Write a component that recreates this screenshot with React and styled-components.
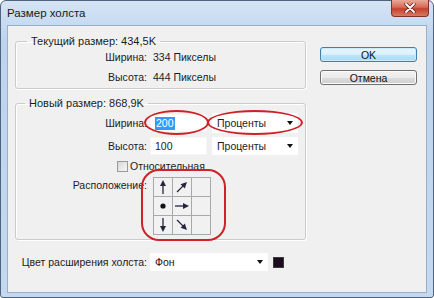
import styled, { createGlobalStyle } from 'styled-components'

const GlobalStyle = createGlobalStyle`
  html, body { margin: 0; padding: 0; background: #fff; }
  body {
    font-family: "Liberation Sans", Arial, sans-serif;
    font-size: 10.5px;
    color: #1c1c1c;
  }
`

const Window = styled.div`
  width: 434px;
  height: 298px;
  box-sizing: border-box;
  border: 1px solid #51647d;
  border-radius: 6px 6px 3px 3px;
  background: linear-gradient(#d5e4f5, #bdd4ed 40px, #c4d9ef);
  padding: 0 6px 4px;
  display: flex;
  flex-direction: column;
`

const TitleBar = styled.div`
  height: 24px;
  display: flex;
  align-items: center;
  margin-right: -2px;
`

const Title = styled.span`
  font-size: 11.5px;
  color: #1a1a1a;
  flex: 1;
`

const CloseBtn = styled.div`
  align-self: flex-start;
  margin-top: -1px;
  width: 38px;
  height: 17px;
  box-sizing: border-box;
  border: 1px solid #80332a;
  border-top: none;
  border-radius: 0 0 4px 4px;
  background: linear-gradient(#eaa999, #d56a57 45%, #c4402e 55%, #d97a62);
  display: flex;
  align-items: center;
  justify-content: center;
`

const Client = styled.div`
  flex: 1;
  display: flex;
  gap: 14px;
  background: #f0f0f0;
  border: 1px solid #98afcb;
  padding: 8px 9px 0 7px;
`

const LeftCol = styled.div`
  width: 291px;
  display: flex;
  flex-direction: column;
`

const RightCol = styled.div`
  display: flex;
  flex-direction: column;
  gap: 8px;
  padding-top: 13px;
`

const Group = styled.fieldset`
  margin: ${p => p.$gap || 0}px 0 0;
  padding: ${p => p.$top}px 11px 4px;
  min-width: 0;
  border: 1px solid #cbcbcb;
  border-radius: 3px;
  box-shadow: inset 1px 1px 0 #fff, 1px 1px 0 #fff;
`

const Legend = styled.legend`
  padding: 0 4px;
  line-height: 14px;
  font-size: 11px;
  margin-left: ${p => p.$shift || 0}px;
`

const Form = styled.div`
  display: grid;
  grid-template-columns: 120px auto;
  column-gap: ${p => p.$col}px;
  row-gap: ${p => p.$row}px;
  align-items: center;
  line-height: 14px;
`

const Label = styled.span`
  display: flex;
  justify-content: flex-end;
  white-space: nowrap;
  align-self: ${p => (p.$top ? 'start' : 'center')};
  padding-top: ${p => (p.$top ? 1 : 0)}px;
`

const Controls = styled.div`
  display: flex;
  align-items: center;
  gap: 5px;
`

const Marked = styled.div`
  position: relative;
  display: flex;
`

const Ring = styled.div`
  position: absolute;
  left: ${p => p.$l}px;
  right: ${p => p.$r}px;
  top: ${p => p.$t}px;
  bottom: ${p => p.$b}px;
  border: 2px solid #cf2128;
  border-radius: ${p => p.$radius || '50%'};
  pointer-events: none;
`

const Field = styled.div`
  width: 57px;
  height: 18px;
  box-sizing: border-box;
  background: #fff;
  border: 1px solid #f6f6f6;
  padding: 0 4px;
  display: flex;
  align-items: center;
`

const Selected = styled.span`
  background: #3399ff;
  color: #fff;
  padding: 0 1px;
  line-height: 13px;
`

const Select = styled.div`
  width: ${p => p.$w}px;
  height: ${p => p.$h}px;
  box-sizing: border-box;
  background: #fff;
  padding: 0 5px 0 5px;
  display: flex;
  align-items: center;
  justify-content: space-between;
  color: ${p => p.$tone || '#1c1c1c'};
`

const Caret = styled.span`
  width: 0;
  height: 0;
  border-left: 3px solid transparent;
  border-right: 3px solid transparent;
  border-top: 4px solid #111;
`

const CheckRow = styled.label`
  grid-column: 1 / -1;
  padding-left: 90px;
  display: flex;
  align-items: center;
  gap: 2px;
`

const Box = styled.span`
  width: 11px;
  height: 11px;
  box-sizing: border-box;
  border: 1px solid #9a9a9a;
  background: linear-gradient(135deg, #d8d8d8, #f7f7f7);
`

const AnchorGrid = styled.div`
  margin-left: 3px;
  display: grid;
  grid-template-columns: repeat(3, 18px);
  grid-auto-rows: 18px;
  gap: 1px;
  border: 1px solid #a9a9a9;
  background: #a9a9a9;
  width: max-content;
`

const Cell = styled.div`
  background: #f1f1f1;
  display: flex;
  align-items: center;
  justify-content: center;
`

const BottomRow = styled.div`
  margin-top: 13px;
  padding-left: 12px;
  display: grid;
  grid-template-columns: 120px auto;
  column-gap: 3px;
  align-items: center;
  line-height: 14px;
`

const Swatch = styled.span`
  width: 11px;
  height: 11px;
  background: #1b0c1d;
  border: 1px solid #3a3a3a;
  box-sizing: border-box;
`

const Button = styled.div`
  width: 97px;
  height: 15px;
  box-sizing: border-box;
  border: 1px solid ${p => (p.$primary ? '#3c7fb1' : '#707070')};
  border-radius: 3px;
  background: ${p => (p.$primary
    ? 'linear-gradient(#eaf6fd, #d9f0fc 50%, #bee6fd 50%, #a7d9f5)'
    : 'linear-gradient(#f2f2f2, #ebebeb 50%, #dddddd 50%, #cfcfcf)')};
  box-shadow: inset 0 0 0 1px ${p => (p.$primary ? '#c8ecfd' : '#fbfbfb')};
  display: flex;
  align-items: center;
  justify-content: center;
  color: #111;
`

const ink = '#25263d'

function Arrow({ dir }) {
  const rot = { n: 0, ne: 45, e: 90, se: 135, s: 180 }[dir]
  return (
    <svg width="16" height="16" viewBox="0 0 16 16">
      <g transform={`rotate(${rot} 8 8)`}>
        <line x1="8" y1="15" x2="8" y2="5" stroke={ink} strokeWidth="1.3" />
        <path d="M8 1 L11 7 L5 7 Z" fill={ink} />
      </g>
    </svg>
  )
}

function Dot() {
  return (
    <svg width="16" height="16" viewBox="0 0 16 16">
      <circle cx="8" cy="8" r="2.6" fill="#111" />
    </svg>
  )
}

const anchors = [['n'], ['ne'], [], ['dot'], ['e'], [], ['s'], ['se'], []]

export default function App() {
  return (
    <>
      <GlobalStyle />
      <Window>
        <TitleBar>
          <Title>Размер холста</Title>
          <CloseBtn>
            <svg width="12" height="10" viewBox="0 0 12 10">
              <path d="M2 1 L10 9 M10 1 L2 9" stroke="#5a1d15" strokeWidth="3.2" strokeLinecap="round" />
              <path d="M2 1 L10 9 M10 1 L2 9" stroke="#fff" strokeWidth="1.8" strokeLinecap="round" />
            </svg>
          </CloseBtn>
        </TitleBar>

        <Client>
          <LeftCol>
            <Group $top={2}>
              <Legend>Текущий размер: 434,5K</Legend>
              <Form $col={6} $row={6}>
                <Label>Ширина:</Label>
                <span>334 Пикселы</span>
                <Label>Высота:</Label>
                <span>444 Пикселы</span>
              </Form>
            </Group>

            <Group $top={3} $gap={7}>
              <Legend $shift={-2}>Новый размер: 868,9K</Legend>
              <Form $col={3} $row={4}>
                <Label>Ширина:</Label>
                <Controls>
                  <Marked>
                    <Field><Selected>200</Selected></Field>
                    <Ring $l={-6} $r={-2} $t={-4} $b={-3} />
                  </Marked>
                  <Marked>
                    <Select $w={86} $h={20}>Проценты<Caret /></Select>
                    <Ring $l={-5} $r={-5} $t={-3} $b={-2} />
                  </Marked>
                </Controls>

                <Label>Высота:</Label>
                <Controls>
                  <Field>100</Field>
                  <Select $w={86} $h={18}>Проценты<Caret /></Select>
                </Controls>

                <CheckRow>
                  <Box />
                  Относительная
                </CheckRow>

                <Label $top>Расположение:</Label>
                <Marked>
                  <AnchorGrid>
                    {anchors.map((a, i) => (
                      <Cell key={i}>
                        {a[0] === 'dot' ? <Dot /> : a[0] ? <Arrow dir={a[0]} /> : null}
                      </Cell>
                    ))}
                  </AnchorGrid>
                  <Ring $l={-9} $r={'auto'} $t={-8} $b={-6} $radius="18px" style={{ width: 81 }} />
                </Marked>
              </Form>
            </Group>

            <BottomRow>
              <Label>Цвет расширения холста:</Label>
              <Controls>
                <Select $w={118} $h={18} $tone="#2a1010">Фон<Caret /></Select>
                <Swatch />
              </Controls>
            </BottomRow>
          </LeftCol>

          <RightCol>
            <Button $primary>OK</Button>
            <Button>Отмена</Button>
          </RightCol>
        </Client>
      </Window>
    </>
  )
}
